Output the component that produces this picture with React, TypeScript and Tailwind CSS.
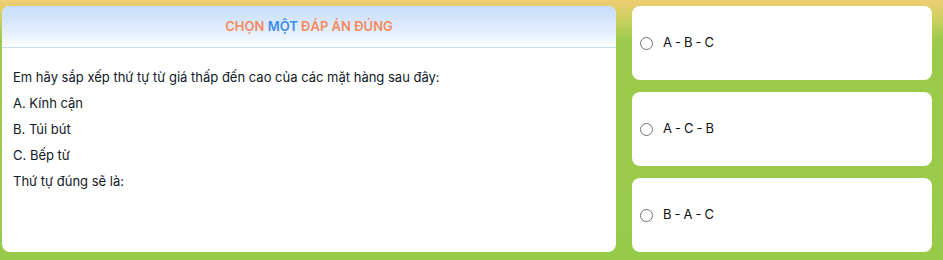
export default function App() {
  const options = ["A - B - C", "A - C - B", "B - A - C"]
  const lines = [
    "Em hãy sắp xếp thứ tự từ giá thấp đến cao của các mặt hàng sau đây:",
    "A. Kính cận",
    "B. Túi bút",
    "C. Bếp từ",
    "Thứ tự đúng sẽ là:",
  ]

  return (
    <main
      className="w-[943px] h-[260px] flex gap-4 pt-[6px] pl-[2px] pr-[11px] pb-[8px] bg-[linear-gradient(to_bottom,#f0cd74_0px,#c9cf5c_20px,#9ccb4b_40px,#98ca4a_100%)]"
      style={{ fontFamily: "Inter, 'Noto Sans', sans-serif" }}
    >
      <section className="w-[614px] bg-white rounded-lg overflow-hidden flex flex-col">
        <div className="h-[42px] flex items-center justify-center bg-[linear-gradient(to_bottom,#c4dcfb,#eef5fe_80%,#ffffff)] border-b border-dashed border-[#c6def4]">
          <h2 className="text-[13px] font-semibold text-[#f6895c]">
            CHỌN <span className="text-[#3c8ce8]">MỘT</span> ĐÁP ÁN ĐÚNG
          </h2>
        </div>
        <div className="px-[11px] pt-[16px] flex flex-col">
          {lines.map((line) => (
            <p key={line} className="text-[13px] leading-[26px] text-[#111827]">
              {line}
            </p>
          ))}
        </div>
      </section>

      <div className="w-[300px] flex flex-col gap-3">
        {options.map((opt) => (
          <label
            key={opt}
            className="flex-1 bg-white rounded-lg flex items-center gap-[10px] px-[8px]"
          >
            <span className="w-[13px] h-[13px] rounded-full border-[1.5px] border-[#707070] bg-white" />
            <span className="text-[13px] text-[#111] tracking-tight">{opt}</span>
          </label>
        ))}
      </div>
    </main>
  )
}
